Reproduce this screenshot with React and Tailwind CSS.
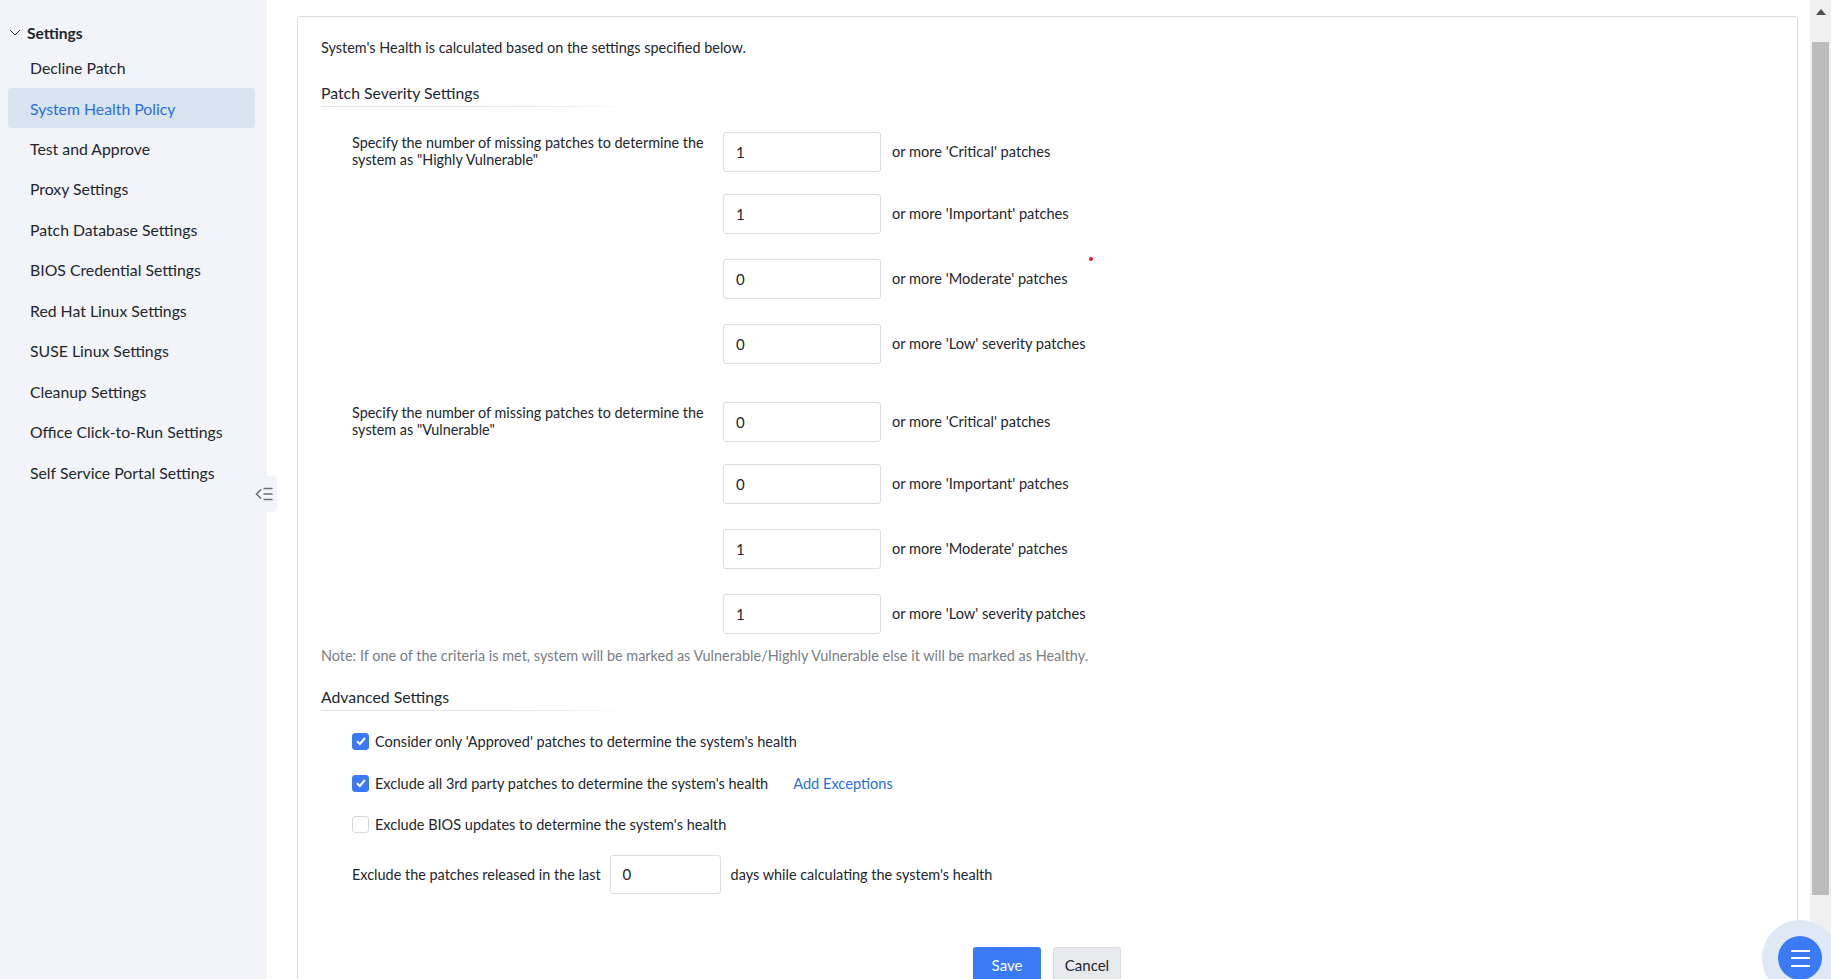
import React from 'react';

const navItems = [
  'Decline Patch',
  'System Health Policy',
  'Test and Approve',
  'Proxy Settings',
  'Patch Database Settings',
  'BIOS Credential Settings',
  'Red Hat Linux Settings',
  'SUSE Linux Settings',
  'Cleanup Settings',
  'Office Click-to-Run Settings',
  'Self Service Portal Settings',
];

const Sidebar = () => (
  <aside className="relative w-[267px] shrink-0 bg-[#f2f4f9] pt-[24px]">
    <div className="flex h-[20px] items-center pl-[9px] text-[15.6px] font-bold text-[#22262e]">
      <svg width="12" height="7" viewBox="0 0 12 7" fill="none" stroke="#33363d" strokeWidth="1" className="mr-[6px] -mt-[4px]">
        <path d="M1 1 6 6 11 1" />
      </svg>
      Settings
    </div>
    <nav className="mt-[4px] flex flex-col gap-[0.45px] pl-[8px] pr-[12px]">
      {navItems.map((item) => (
        <a
          key={item}
          className={`flex h-[40px] items-center rounded-[3px] pl-[22px] text-[15.8px] ${
            item === 'System Health Policy' ? 'bg-[#d8e4f0] text-[#2a6fdb]' : 'text-[#22262e]'
          }`}
        >
          {item}
        </a>
      ))}
    </nav>
    {/* collapse handle hangs over the sidebar edge */}
    <button className="absolute left-[253px] top-[476px] flex h-[36px] w-[24px] items-center justify-center rounded-r-[4px] bg-[#f2f4f9]">
      <svg width="20" height="14" viewBox="0 0 20 14" fill="none" stroke="#6b6f78" strokeWidth="1.6">
        <path d="M6 2.5 1.5 7 6 11.5" />
        <path d="M8.5 1.5h9M8.5 7h9M8.5 12.5h9" />
      </svg>
    </button>
  </aside>
);

const NumberBox = ({ value, className = 'w-[158px] h-[40px]' }) => (
  <div className={`flex shrink-0 items-center rounded-[3px] border border-[#dcdde4] bg-white pl-[12px] text-[15px] text-[#22262e] ${className}`}>
    {value}
  </div>
);

const SeverityRow = ({ value, text, mt, label }) => (
  <div className="flex" style={{ marginTop: mt }}>
    <div className="w-[371px] shrink-0 pt-[2px] text-[14.4px] leading-[17px] text-[#22262e]">
      {label && (
        <>
          Specify the number of missing patches to determine the
          <br />
          {label}
        </>
      )}
    </div>
    <NumberBox value={value} />
    <span className="ml-[11px] flex items-center text-[14.6px] text-[#22262e]">{text}</span>
  </div>
);

const SectionTitle = ({ children, className }) => (
  <div className={className}>
    <h3 className="h-[20px] text-[15.8px] leading-[20px] text-[#22262e]">{children}</h3>
    <div className="mt-[3px] h-px w-[315px] bg-gradient-to-r from-[#e4e5ea] via-[#e9eaee] via-70% to-white" />
  </div>
);

const Check = ({ checked, label, children, className }) => (
  <div className={`flex h-[18px] items-center text-[14.5px] text-[#22262e] ${className}`}>
    <span
      className={`mr-[6px] -mt-[2px] flex h-[17px] w-[17px] shrink-0 items-center justify-center rounded-[3px] border ${
        checked ? 'border-[#3b7af5] bg-[#3b7af5]' : 'border-[#d5d7e0] bg-white'
      }`}
    >
      {checked && (
        <svg width="12" height="12" viewBox="0 0 12 12" fill="none" stroke="white" strokeWidth="2">
          <path d="M2 6.2 4.8 9 10 3" />
        </svg>
      )}
    </span>
    {label}
    {children}
  </div>
);

const App = () => (
  <div className="relative flex h-[979px] w-[1831px] overflow-hidden bg-white font-['Lato',sans-serif]">
    <Sidebar />

    <main className="flex-1 overflow-hidden pl-[30px] pr-[12px] pt-[16px]">
      <div className="h-[1100px] rounded-[3px] border border-[#dcdde4] pl-[23px] pt-[21px]">
        <p className="h-[20px] text-[14.45px] leading-[20px] text-[#22262e]">
          System's Health is calculated based on the settings specified below.
        </p>

        <SectionTitle className="mt-[25px]">Patch Severity Settings</SectionTitle>

        <div className="mt-[25px] pl-[31px]">
          <SeverityRow mt={0} value="1" text="or more 'Critical' patches" label={'system as "Highly Vulnerable"'} />
          <SeverityRow mt={22} value="1" text="or more 'Important' patches" />
          <SeverityRow mt={25} value="0" text="or more 'Moderate' patches" />
          <SeverityRow mt={25} value="0" text="or more 'Low' severity patches" />
          <SeverityRow mt={38} value="0" text="or more 'Critical' patches" label={'system as "Vulnerable"'} />
          <SeverityRow mt={22} value="0" text="or more 'Important' patches" />
          <SeverityRow mt={25} value="1" text="or more 'Moderate' patches" />
          <SeverityRow mt={25} value="1" text="or more 'Low' severity patches" />
        </div>

        <p className="mt-[12px] h-[20px] text-[14.45px] leading-[20px] text-[#7a7d85]">
          Note: If one of the criteria is met, system will be marked as Vulnerable/Highly Vulnerable else it will be marked as Healthy.
        </p>

        <SectionTitle className="mt-[21px]">Advanced Settings</SectionTitle>

        <div className="mt-[22px] pl-[31px]">
          <Check checked label="Consider only 'Approved' patches to determine the system's health" />
          <Check checked label="Exclude all 3rd party patches to determine the system's health" className="mt-[24px]">
            <a className="ml-[25px] text-[14.6px] text-[#2a6fdb]">Add Exceptions</a>
          </Check>
          <Check label="Exclude BIOS updates to determine the system's health" className="mt-[23px]" />
          <div className="mt-[21px] flex items-center text-[14.45px] text-[#22262e]">
            Exclude the patches released in the last
            <NumberBox value="0" className="ml-[9px] h-[39px] w-[111px]" />
            <span className="ml-[10px]">days while calculating the system's health</span>
          </div>
        </div>

        <div className="mt-[53px] flex justify-center gap-[12px] pr-[24px] text-[15px]">
          <button className="h-[36px] w-[68px] rounded-[3px] bg-[#3b7af5] text-white">Save</button>
          <button className="h-[36px] w-[68px] rounded-[3px] border border-[#dcdde4] bg-[#e8e9ed] text-[#22262e]">Cancel</button>
        </div>
      </div>
    </main>

    {/* window scrollbar */}
    <div className="flex w-[21px] shrink-0 flex-col items-center bg-[#f0f0f0]">
      <svg width="10" height="6" viewBox="0 0 10 6" className="mt-[9px]" fill="#505050">
        <path d="M5 0 10 6H0z" />
      </svg>
      <div className="mt-[27px] h-[853px] w-[17px] bg-[#bcbcbc]" />
    </div>

    <span className="absolute left-[1089px] top-[257px] h-[4px] w-[4px] rounded-full bg-[#e8142a]" />

    <button className="absolute left-[1762px] top-[920px] flex h-[76px] w-[76px] items-center justify-center rounded-full bg-[#dfe8f5]">
      <span className="flex h-[44px] w-[44px] flex-col items-center justify-center gap-[5.5px] rounded-full bg-[#3b7af5]">
        <i className="h-[2px] w-[19px] bg-white" />
        <i className="h-[2px] w-[19px] bg-white" />
        <i className="h-[2px] w-[19px] bg-white" />
      </span>
    </button>
  </div>
);

export default App;
